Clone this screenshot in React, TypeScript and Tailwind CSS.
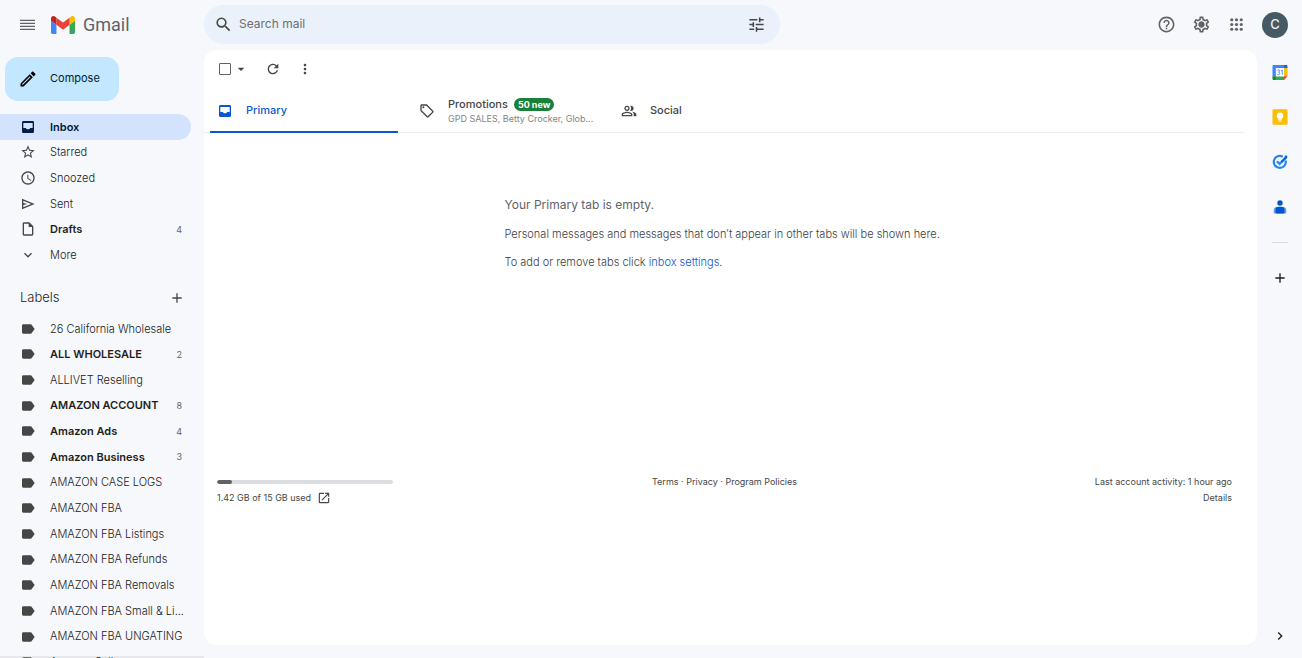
import React, { useState } from 'react';
import {
  MdAccessTime, MdAdd, MdArrowDropDown, MdChevronRight, MdExpandMore, MdHelpOutline, MdLabel,
  MdMoreVert, MdOpenInNew, MdOutlineEdit, MdOutlineInsertDriveFile, MdOutlineLocalOffer,
  MdOutlinePeopleAlt, MdOutlineSettings, MdRefresh, MdSearch, MdStarOutline, MdTune,
} from 'react-icons/md';
import clsx from 'clsx';

interface IconProps {
  className?: string;
}

interface NavItem {
  name: string;
  icon?: React.ComponentType<IconProps>;
  count?: number;
}

const InboxIcon = ({ className }: IconProps) => (
  <svg viewBox="0 0 24 24" fill="currentColor" className={className} aria-hidden="true">
    <path fillRule="evenodd" d="M5 3h14a2 2 0 0 1 2 2v14a2 2 0 0 1-2 2H5a2 2 0 0 1-2-2V5c0-1.1.9-2 2-2zm0 3v7.500h3.500c.8 1.300 2 2 3.500 2s2.700-.7 3.500-2H19V6z" />
  </svg>
);

const SendIcon = ({ className }: IconProps) => (
  <svg viewBox="0 0 24 24" fill="currentColor" className={className} aria-hidden="true">
    <path fillRule="evenodd" d="M3 20V4l19 8zm2-3l11.850-5L5 7v3.500l6 1.500-6 1.500z" />
  </svg>
);

const MenuIcon = ({ className }: IconProps) => (
  <svg viewBox="0 0 16 16" fill="currentColor" className={className} aria-hidden="true">
    <path d="M0 2.700h15v1.400H0zM0 5.700h15v1.400H0zM0 8.700h15v1.400H0zM0 11.700h15v1.400H0z" />
  </svg>
);

const AppsIcon = ({ className }: IconProps) => (
  <svg viewBox="0 0 24 24" fill="currentColor" className={className} aria-hidden="true">
    {[6, 12, 18].map(cy => [6, 12, 18].map(cx => <circle key={`${cx}-${cy}`} cx={cx} cy={cy} r="2" />))}
  </svg>
);

const GearIcon = ({ className }: IconProps) => (
  <svg viewBox="0 0 24 24" fill="currentColor" className={className} aria-hidden="true">
    <MdOutlineSettings size={24} />
    <circle cx="12" cy="12" r="3" />
  </svg>
);

const FOLDERS: NavItem[] = [
  { name: 'Inbox', icon: InboxIcon },
  { name: 'Starred', icon: MdStarOutline },
  { name: 'Snoozed', icon: MdAccessTime },
  { name: 'Sent', icon: SendIcon },
  { name: 'Drafts', icon: MdOutlineInsertDriveFile, count: 4 },
  { name: 'More', icon: MdExpandMore },
];

const LABELS: NavItem[] = [
  { name: '26 California Wholesale' },
  { name: 'ALL WHOLESALE', count: 2 },
  { name: 'ALLIVET Reselling' },
  { name: 'AMAZON ACCOUNT', count: 8 },
  { name: 'Amazon Ads', count: 4 },
  { name: 'Amazon Business', count: 3 },
  { name: 'AMAZON CASE LOGS' },
  { name: 'AMAZON FBA' },
  { name: 'AMAZON FBA Listings' },
  { name: 'AMAZON FBA Refunds' },
  { name: 'AMAZON FBA Removals' },
  { name: 'AMAZON FBA Small & Li...' },
  { name: 'AMAZON FBA UNGATING' },
  { name: 'Amazon Seller' },
];

const GmailLogo = () => (
  <svg viewBox="52 42 88 66" className="h-[18px] w-6" aria-hidden="true">
    <path fill="#4285f4" d="M58 108h14V74L52 59v43c0 3.32 2.69 6 6 6" />
    <path fill="#34a853" d="M120 108h14c3.32 0 6-2.69 6-6V59l-20 15" />
    <path fill="#fbbc04" d="M120 48v26l20-15v-8c0-7.42-8.47-11.65-14.4-7.2" />
    <path fill="#ea4335" d="M72 74V48l24 18 24-18v26L96 92" />
    <path fill="#c5221f" d="M52 51v8l20 15V48l-5.6-4.2c-5.94-4.45-14.4-.22-14.4 7.2" />
  </svg>
);

const CalendarIcon = () => (
  <svg viewBox="0 0 16 16" className="size-4" aria-hidden="true">
    <path fill="#4285f4" d="M1.500 1H12v3.200H3.900V12.300H.5V2a1 1 0 0 1 1-1z" />
    <path fill="#1967d2" d="M12 1h2.500a1 1 0 0 1 1 1v2.200H12z" />
    <path fill="#fbbc04" d="M12 4.200h3.500v8.100H12z" />
    <path fill="#34a853" d="M3.900 12.300H12V16H3.900z" />
    <path fill="#188038" d="M.5 12.300h3.400V16H1.500a1 1 0 0 1-1-1z" />
    <path fill="#ea4335" d="M12 12.300h3.500L12 16z" />
    <path fill="#fff" d="M3.900 4.200H12v8.100H3.900z" />
    <path fill="none" stroke="#4285f4" strokeWidth=".9" d="M5.200 6.500q.3-.8 1.200-.8 1.100 0 1.100 1.100 0 1-1.200 1.200 1.400.1 1.400 1.400 0 1.300-1.300 1.300-1 0-1.300-.9M9 6.800l1.300-.8v4.800" />
  </svg>
);

const KeepIcon = () => (
  <svg viewBox="0 0 16 16" className="size-4" aria-hidden="true">
    <rect x=".5" y=".2" width="15" height="15.6" rx="1.3" fill="#fbbc04" />
    <path fill="#fff" d="M8 3.6a3.3 3.3 0 0 0-1.8 6.1v1h3.6v-1A3.3 3.3 0 0 0 8 3.6zM6.3 11.4h3.4v1.1H6.3z" />
  </svg>
);

const TasksIcon = () => (
  <svg viewBox="0 0 16 16" className="size-4" fill="none" aria-hidden="true">
    <path stroke="#2684fc" strokeWidth="2.2" d="M13.6 6.4A6 6 0 1 1 10.8 2.700" />
    <path stroke="#2684fc" strokeWidth="2.3" d="M4.9 7.2l2.7 2.7 2.4-2.4" />
    <path stroke="#0066da" strokeWidth="2.4" d="M9.6 7.900l4.400-4.400" />
    <circle cx="14" cy="3" r="1.4" fill="#0066da" />
  </svg>
);

const ContactsIcon = () => (
  <svg viewBox="0 0 16 16" className="size-4" aria-hidden="true">
    <circle cx="8" cy="4" r="2.7" fill="#0057cc" />
    <path fill="#6f9df8" d="M5 8h6a3.300 3.300 0 0 1 3.300 3.300v2.300a1 1 0 0 1-1 1H2.700a1 1 0 0 1-1-1v-2.300A3.300 3.300 0 0 1 5 8z" />
    <path fill="#0057cc" d="M6.500 7.800h3a3 3 0 0 1 3 3v2.800a1 1 0 0 1-1 1h-7a1 1 0 0 1-1-1v-2.800a3 3 0 0 1 3-3z" />
  </svg>
);

const APPS = [
  { name: 'Calendar', Icon: CalendarIcon },
  { name: 'Keep', Icon: KeepIcon },
  { name: 'Tasks', Icon: TasksIcon },
  { name: 'Contacts', Icon: ContactsIcon },
];

const NavRow: React.FC<{ item: NavItem; active?: boolean }> = ({ item, active }) => {
  const Icon = item.icon ?? MdLabel;
  return (
    <li className="min-h-0">
      <a
        href="#"
        className={clsx(
          'flex h-full w-[191px] items-center rounded-r-full pl-5 pr-[9px] text-[11px]',
          active && 'bg-[#d3e3fd] font-semibold text-[#001d35]',
          item.count && 'font-semibold text-[#1f1f1f]',
          !active && !item.count && 'font-light text-[#202124]'
        )}
      >
        <Icon className={clsx('size-4 shrink-0', active ? 'text-[#041e49]' : 'text-[#444746]')} />
        <span className="ml-[14px] flex-1 whitespace-nowrap">{item.name}</span>
        {item.count && <span className="text-[9px] font-normal text-[#5f6368]">{item.count}</span>}
      </a>
    </li>
  );
};

const Header = () => (
  <header className="flex h-[50px] shrink-0 items-center text-[#5f6368]">
    <div className="flex w-[204px] shrink-0 items-center pl-5">
      <button aria-label="Main menu"><MenuIcon className="size-4" /></button>
      <a href="#" className="ml-[15px] flex items-center gap-2">
        <GmailLogo />
        <span className="font-[Roboto,sans-serif] text-lg leading-5 text-[#5f6368]">Gmail</span>
      </a>
    </div>
    <form className="mb-px flex h-[39px] w-[576px] items-center rounded-full bg-[#eaf1fb] pl-[10px] pr-[14px]">
      <button type="button" aria-label="Search"><MdSearch className="size-[19px] text-[#444746]" /></button>
      <input
        type="text"
        aria-label="Search mail"
        placeholder="Search mail"
        className="ml-1.5 min-w-0 flex-1 bg-transparent pb-0.5 text-xs outline-none placeholder:text-[#6a6e72]"
      />
      <button type="button" aria-label="Show search options"><MdTune className="size-[19px] text-[#444746]" /></button>
    </form>
    <div className="mb-px ml-auto flex items-center gap-4 pr-[14px]">
      <button aria-label="Support"><MdHelpOutline className="size-[19px]" /></button>
      <button aria-label="Settings"><GearIcon className="size-[19px]" /></button>
      <button aria-label="Google apps"><AppsIcon className="size-[19px]" /></button>
      <button aria-label="Google Account" className="flex size-[26px] items-center justify-center rounded-full bg-[#455a64] text-[13px] font-medium text-[#eceff1]">
        C
      </button>
    </div>
  </header>
);

const Sidebar = () => (
  <aside className="flex w-[204px] shrink-0 flex-col overflow-hidden pt-[7px] shadow-[inset_0_-2px_0_#e8e8ec]">
    <button className="ml-[5px] flex h-11 w-[114px] shrink-0 items-center rounded-[13px] bg-[#c2e7ff] pl-[13px] text-[11px] text-[#001d35]">
      <MdOutlineEdit className="size-5 text-black" />
      <span className="mb-0.5 ml-3">Compose</span>
    </button>
    <nav aria-label="Folders" className="mt-[13px] shrink-0">
      <ul className="grid h-[154px] auto-rows-fr">
        {FOLDERS.map(f => <NavRow key={f.name} item={f} active={f.name === 'Inbox'} />)}
      </ul>
    </nav>
    <div className="mt-3 flex h-9 w-[191px] shrink-0 items-center justify-between pl-5 pr-1.5">
      <h2 className="text-[13px] font-light text-[#1f1f1f]">Labels</h2>
      <button aria-label="Create new label"><MdAdd className="size-4 text-[#444746]" /></button>
    </div>
    <ul className="grid h-[359px] shrink-0 auto-rows-fr">
      {LABELS.map(l => <NavRow key={l.name} item={l} />)}
    </ul>
  </aside>
);

const Toolbar = () => {
  const [checked, setChecked] = useState(false);
  return (
    <div className="flex h-[38px] shrink-0 items-center pl-[15px] text-[#444746]">
      <input
        type="checkbox"
        aria-label="Select all"
        checked={checked}
        onChange={e => setChecked(e.target.checked)}
        className="size-3 appearance-none rounded-[1px] border border-[#5f6368] checked:bg-[#5f6368]"
      />
      <button aria-label="Select" className="ml-0.5"><MdArrowDropDown className="size-4" /></button>
      <button aria-label="Refresh" className="ml-4"><MdRefresh className="size-4" /></button>
      <button aria-label="More" className="ml-4"><MdMoreVert className="size-4" /></button>
    </div>
  );
};

const Tabs = () => (
  <div role="tablist" className="mr-3 flex h-[45px] shrink-0 border-b border-[#eceff1] pl-1.5 text-[11px] text-[#444746]">
    <div className="w-[202px]">
      <button role="tab" aria-selected="true" className="flex h-[45px] w-[188px] items-center border-b-2 border-[#0b57d0] pt-0.5 pl-[7px] font-medium text-[#0b57d0]">
        <InboxIcon className="size-4" />
        <span className="ml-[13px]">Primary</span>
      </button>
    </div>
    <button role="tab" aria-selected="false" className="flex h-[45px] w-[202px] items-center pt-px pl-[7px] text-left">
      <MdOutlineLocalOffer className="size-4 shrink-0" />
      <span className="ml-[13px] block">
        <span className="flex h-4 items-center gap-1.5 font-medium">
          Promotions
          <span className="rounded-full bg-[#188038] px-1 text-[9px] leading-[13px] font-bold text-white">50 new</span>
        </span>
        <span className="block text-[9px] leading-[14px] whitespace-nowrap text-[#80868b]">GPD SALES, Betty Crocker, Glob...</span>
      </span>
    </button>
    <button role="tab" aria-selected="false" className="flex h-[45px] items-center pl-[7px] font-medium">
      <MdOutlinePeopleAlt className="size-4" />
      <span className="ml-[13px]">Social</span>
    </button>
  </div>
);

const Footer = () => (
  <footer className="mt-[204px] mr-3 grid grid-cols-3 px-[13px] text-[9px] leading-4 text-[#444746]">
    <div>
      <div className="my-1.5 h-1 w-44 overflow-hidden rounded-full bg-[#dadce0]">
        <div className="h-full w-[15px] rounded-full bg-[#5f6368]" />
      </div>
      <div className="flex items-center gap-1.5">
        <span>1.42 GB of 15 GB used</span>
        <a href="#" aria-label="Manage storage"><MdOpenInNew className="size-[14px]" /></a>
      </div>
    </div>
    <p className="text-center">
      <a href="#">Terms</a> · <a href="#">Privacy</a> · <a href="#">Program Policies</a>
    </p>
    <div className="text-right">
      <p>Last account activity: 1 hour ago</p>
      <a href="#">Details</a>
    </div>
  </footer>
);

const App: React.FC = () => {
  return (
    <div className="flex h-screen flex-col overflow-hidden bg-[#f6f8fc] font-[Inter,sans-serif]">
      <Header />
      <div className="flex min-h-0 flex-1">
        <Sidebar />

        <main className="mb-[13px] flex min-w-0 flex-1 flex-col rounded-[13px] bg-white">
          <Toolbar />
          <Tabs />
          <div className="mr-3 pt-[63px]">
            <div className="mx-auto flex w-[440px] flex-col gap-3 text-[11px] leading-4 font-light text-[#3c4043]">
              <p className="text-xs leading-[18px] font-normal text-[#5f6368]">Your Primary tab is empty.</p>
              <p className="whitespace-nowrap">Personal messages and messages that don’t appear in other tabs will be shown here.</p>
              <p>To add or remove tabs click <a href="#" className="text-[#0b57d0]">inbox settings</a>.</p>
            </div>
          </div>
          <Footer />
        </main>

        {/* Side panel */}
        <aside className="flex w-[45px] shrink-0 flex-col items-center pt-[14px] pb-[14px]">
          <div className="flex flex-col gap-[29px]">
            {APPS.map(({ name, Icon }) => (
              <button key={name} aria-label={name}><Icon /></button>
            ))}
          </div>
          <hr className="mt-[27px] w-4 border-[#dadce0]" />
          <button aria-label="Get add-ons" className="mt-[27px]"><MdAdd className="size-4 text-[#1f1f1f]" /></button>
          <button aria-label="Hide side panel" className="mt-auto"><MdChevronRight className="size-4 text-[#1f1f1f]" /></button>
        </aside>
      </div>
    </div>
  );
};

export default App;
